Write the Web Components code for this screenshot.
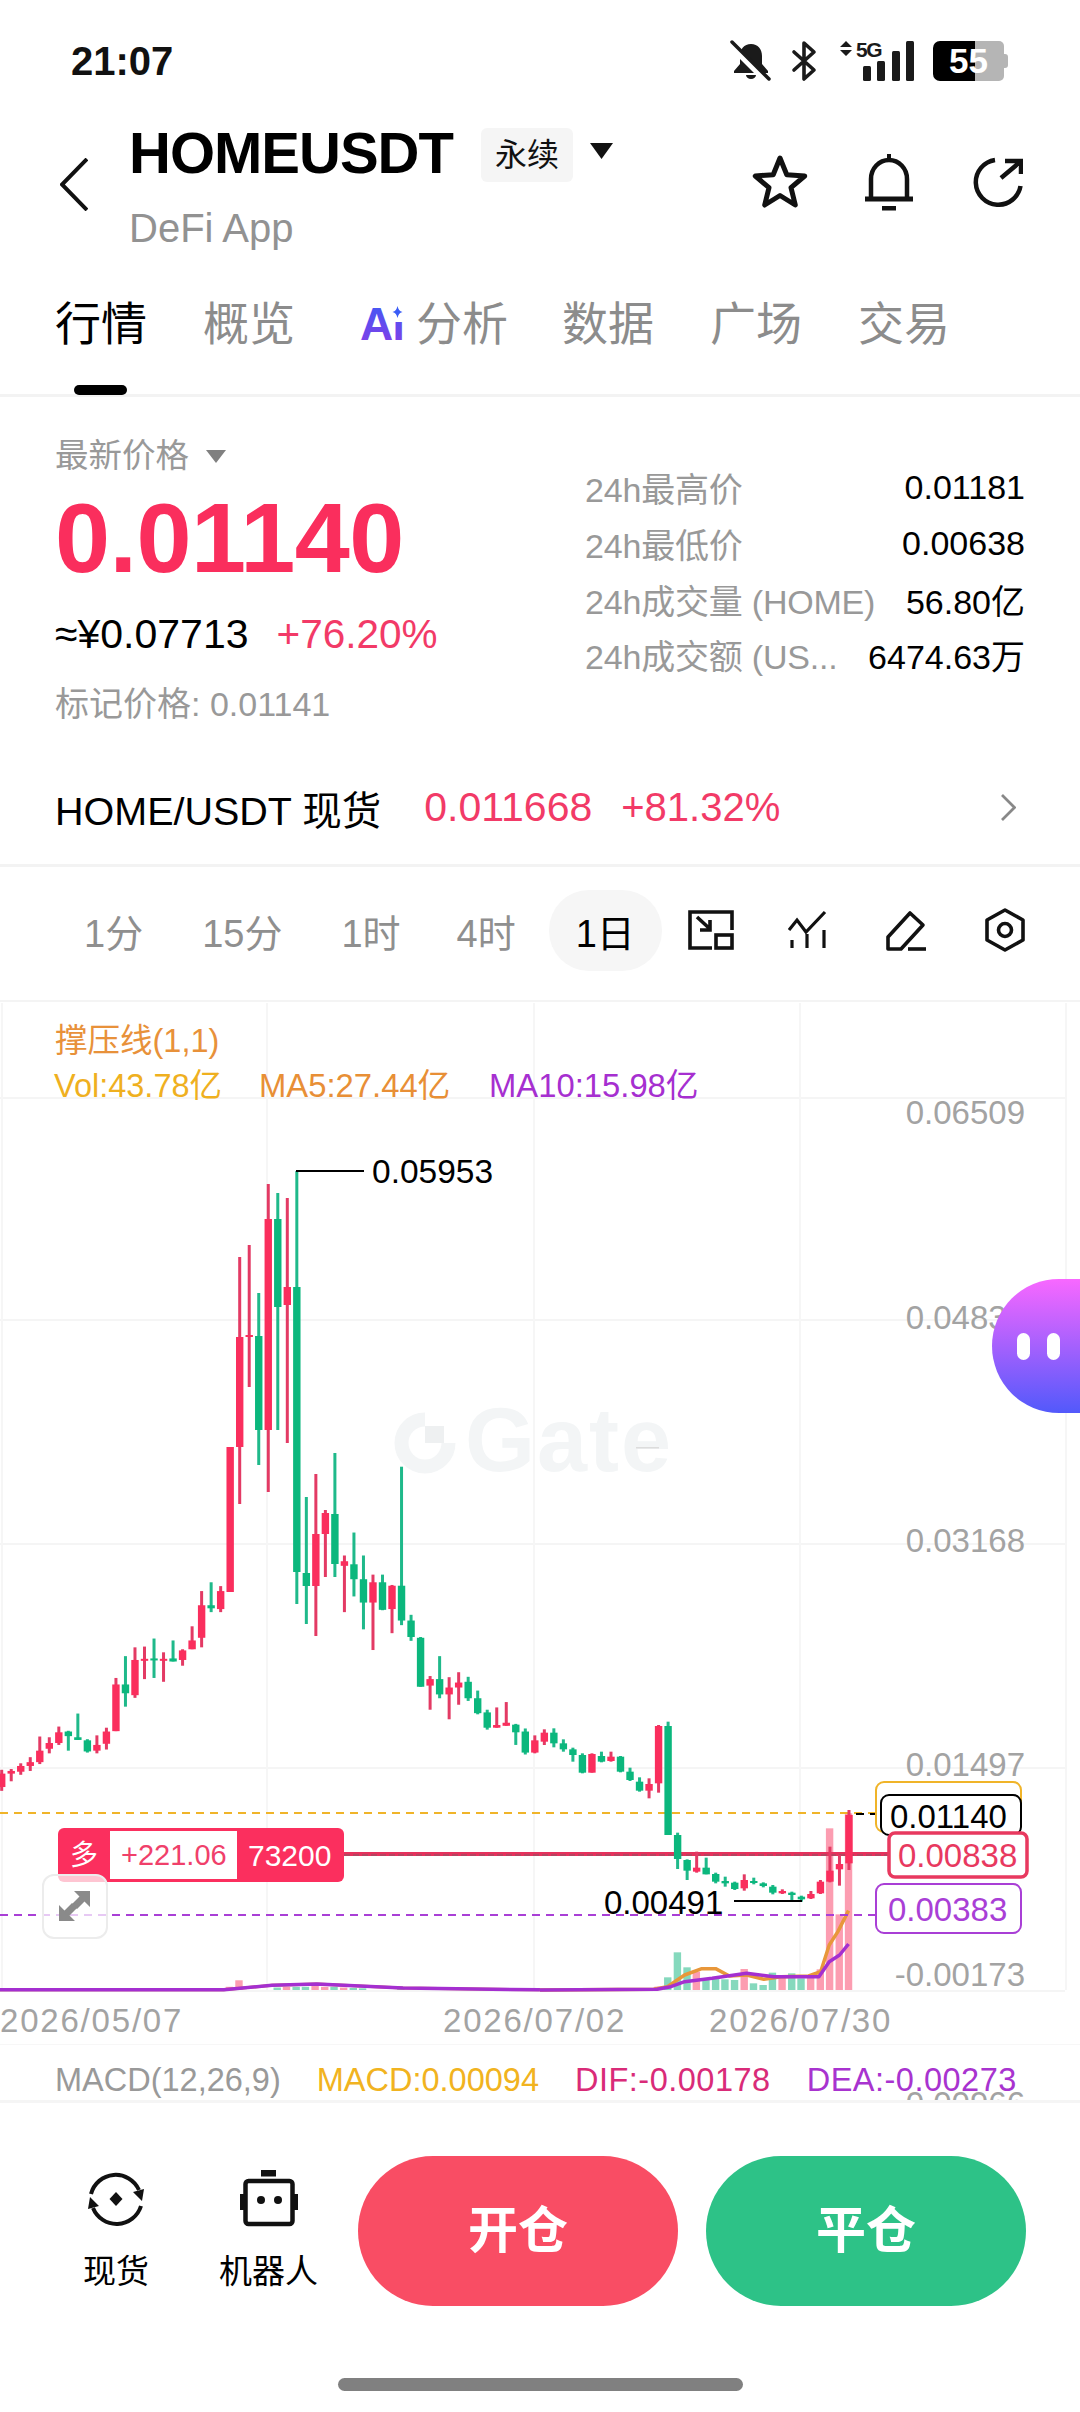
<!DOCTYPE html>
<html lang="zh">
<head>
<meta charset="utf-8">
<title>HOMEUSDT</title>
<style>
  html, body { margin: 0; padding: 0; background: #fff; }
  body {
    position: relative;
    width: 1080px;
    height: 2412px;
    overflow: hidden;
    font-family: "Liberation Sans", "Noto Sans CJK SC", sans-serif;
    color: #000;
  }
</style>
</head>
<body>
  <status-bar></status-bar>
  <market-header></market-header>
  <market-tabs>
    <market-tab active>行情</market-tab>
    <market-tab>概览</market-tab>
    <market-tab ai>分析</market-tab>
    <market-tab>数据</market-tab>
    <market-tab>广场</market-tab>
    <market-tab>交易</market-tab>
  </market-tabs>
  <price-panel>
    <stat-row slot="stats"><span slot="label">24h最高价</span>0.01181</stat-row>
    <stat-row slot="stats"><span slot="label">24h最低价</span>0.00638</stat-row>
    <stat-row slot="stats"><span slot="label">24h成交量 (HOME)</span>56.80亿</stat-row>
    <stat-row slot="stats"><span slot="label">24h成交额 (US...</span>6474.63万</stat-row>
  </price-panel>
  <spot-row></spot-row>
  <interval-bar></interval-bar>
  <kline-chart></kline-chart>
  <macd-legend></macd-legend>
  <trade-bar></trade-bar>
  <home-indicator></home-indicator>
  <ai-bubble></ai-bubble>

<script>
// components/status-bar
class StatusBar extends HTMLElement {
  constructor() {
    super();
    this.attachShadow({ mode: 'open' });
  }

  connectedCallback() {
    this.shadowRoot.innerHTML = `
      <style>
        :host { display: flex; align-items: center; justify-content: space-between; box-sizing: border-box; height: 100px; padding: 22px 72px 0 71px; }
        .time { font-size: 40px; font-weight: 700; line-height: 44px; color: #111; }
        .icons { display: flex; align-items: center; gap: 21px; }
        svg { display: block; overflow: visible; }
        .net { margin-left: 3px; margin-right: -3px; }
      </style>
      <div class="time">21:07</div>
      <div class="icons">
        <svg width="40" height="40" viewBox="0 0 40 40">
          <path fill="#1a1a1a" d="M20 3c-7 0-11 5-11 12v8l-6 7v2h34v-2l-6-7v-8C31 8 27 3 20 3z"/>
          <path fill="#1a1a1a" d="M15 34h10a5 4 0 0 1-10 0z"/>
          <path stroke="#fff" stroke-width="7" d="M-1 3 36 40"/>
          <path stroke="#1a1a1a" stroke-width="3.5" stroke-linecap="round" d="M1 1 38 38"/>
        </svg>
        <svg width="24" height="40" viewBox="0 0 24 40" fill="none" stroke="#1a1a1a" stroke-width="3.6" stroke-linejoin="round" stroke-linecap="round">
          <path d="M2 11 22 29 12 38V2L22 11 2 29"/>
        </svg>
        <svg class="net" width="75" height="40" viewBox="0 0 75 40">
          <path fill="#1a1a1a" d="M6 0l6 6H0zM6 15 0 9h12z"/>
          <text x="16" y="16" font-size="21" font-weight="700" letter-spacing="-1.5" fill="#1a1a1a">5G</text>
          <rect x="23" y="25" width="8" height="15" rx="1.5" fill="#1a1a1a"/>
          <rect x="37" y="20" width="8" height="20" rx="1.5" fill="#1a1a1a"/>
          <rect x="52" y="10" width="8" height="30" rx="1.5" fill="#1a1a1a"/>
          <rect x="66" y="0" width="8" height="40" rx="1.5" fill="#1a1a1a"/>
        </svg>
        <svg width="75" height="40" viewBox="0 0 75 40">
          <path fill="#b5b5b5" d="M42 0h24a5 5 0 0 1 5 5v30a5 5 0 0 1-5 5H42z"/>
          <path fill="#b5b5b5" d="M71 13h1a3 3 0 0 1 3 3v8a3 3 0 0 1-3 3h-1z"/>
          <path fill="#000" d="M42 0H7a7 7 0 0 0-7 7v26a7 7 0 0 0 7 7h35z"/>
          <text x="16" y="32" font-size="35" font-weight="700" fill="#fff">55</text>
        </svg>
      </div>
    `;
  }
}
customElements.define('status-bar', StatusBar);

// components/market-header
class MarketHeader extends HTMLElement {
  constructor() {
    super();
    this.attachShadow({ mode: 'open' });
  }

  connectedCallback() {
    this.shadowRoot.innerHTML = `
      <style>
        :host { display: flex; align-items: flex-start; box-sizing: border-box; height: 170px; padding: 28px 57px 0 60px; }
        svg { display: block; }
        .back { margin: 30px 41px 0 0; }
        .title { display: flex; align-items: center; height: 54px; }
        h1 { margin: -4px 0 0; font-size: 58px; font-weight: 700; letter-spacing: -1px; line-height: 54px; }
        .badge { margin-left: 28px; padding: 0 14px; height: 54px; line-height: 54px; font-size: 32px; background: #f5f5f5; border-radius: 6px; color: #111; }
        .caret { margin-left: 17px; margin-top: -8px; }
        .sub { margin-top: 23px; font-size: 40px; line-height: 46px; color: #929292; }
        .actions { display: flex; align-items: center; height: 108px; margin-left: auto; }
        .star { margin-right: 55px; }
        .bell { margin-right: 60px; }
      </style>
      <svg class="back" width="28" height="53" viewBox="0 0 28 53" fill="none" stroke="#111" stroke-width="4">
        <path d="M27 1 2 26.500 27 52"/>
      </svg>
      <div>
        <div class="title">
          <h1>HOMEUSDT</h1>
          <span class="badge">永续</span>
          <svg class="caret" width="23" height="16" viewBox="0 0 23 16"><path fill="#111" d="M0 0h23L11.500 16z"/></svg>
        </div>
        <div class="sub">DeFi App</div>
      </div>
      <div class="actions">
        <svg class="star" width="60" height="60" viewBox="0 0 60 60" fill="none" stroke="#111" stroke-width="5" stroke-linejoin="round">
          <path d="M30 6 36.800 22.700 54.700 24 41 35.600 45.300 53 30 43.500 14.700 53 19 35.600 5.300 24 23.200 22.700z"/>
        </svg>
        <svg class="bell" width="48" height="57" viewBox="0 0 48 57" fill="none" stroke="#111" stroke-width="4.500">
          <path d="M6 45V25a18 19 0 0 1 36 0v20"/>
          <path stroke-width="5" d="M0 45h48"/>
          <rect x="22" y="0" width="4" height="7" fill="#111" stroke="none"/>
          <rect x="17" y="52" width="14" height="4.500" fill="#111" stroke="none"/>
        </svg>
        <svg width="50" height="50" viewBox="0 0 50 50" fill="none" stroke="#111" stroke-width="4.500">
          <path d="M22 3A22.500 22.500 0 1 0 47.500 29"/>
          <path d="M28 21 47 5M32 4H48V17"/>
        </svg>
      </div>
    `;
  }
}
customElements.define('market-header', MarketHeader);

// components/market-tabs
class MarketTabs extends HTMLElement {
  constructor() {
    super();
    this.attachShadow({ mode: 'open' });
  }

  connectedCallback() {
    this.shadowRoot.innerHTML = `
      <style>
        :host { display: flex; gap: 56px; box-sizing: border-box; height: 127px; padding: 27px 0 0 55px; border-bottom: 3px solid #f3f3f3; }
      </style>
      <slot></slot>
    `;
  }
}
customElements.define('market-tabs', MarketTabs);

class MarketTab extends HTMLElement {
  constructor() {
    super();
    this.attachShadow({ mode: 'open' });
  }

  connectedCallback() {
    const ai = this.hasAttribute('ai') ? `
      <svg class="ai" width="46" height="40" viewBox="0 0 46 40">
        <defs><linearGradient id="g" x1="0" y1="0" x2="0" y2="1"><stop offset="0" stop-color="#3a5cf6"/><stop offset="1" stop-color="#8b3be6"/></linearGradient></defs>
        <text x="0" y="36" font-size="46" font-weight="700" letter-spacing="-1" fill="url(#g)">Ai</text>
        <rect x="30" y="0" width="16" height="18" fill="#fff"/>
        <path fill="#3a5cf6" d="M37.500 2c.8 3.500 2 5 5 6-3 1-4.200 2.500-5 6-.8-3.500-2-5-5-6 3-1 4.200-2.500 5-6z"/>
      </svg>` : '';
    this.shadowRoot.innerHTML = `
      <style>
        :host { display: flex; align-items: center; position: relative; height: 54px; font-size: 46px; line-height: 54px; color: #8c8c8c; }
        :host([active]) { color: #000; }
        :host([ai]) { margin-left: 9px; margin-right: -2px; }
        :host([active])::after { content: ""; position: absolute; left: 19px; top: 88px; width: 53px; height: 10px; border-radius: 5px; background: #000; }
        .ai { margin-right: 10px; overflow: visible; }
      </style>
      ${ai}<slot></slot>
    `;
  }
}
customElements.define('market-tab', MarketTab);

// components/price-panel
class PricePanel extends HTMLElement {
  constructor() {
    super();
    this.attachShadow({ mode: 'open' });
  }

  connectedCallback() {
    this.shadowRoot.innerHTML = `
      <style>
        :host { display: flex; box-sizing: border-box; height: 357px; padding: 36px 55px 0; }
        .left { width: 530px; }
        .label { display: flex; align-items: center; gap: 17px; font-size: 33.500px; line-height: 46px; color: #999; }
        .price { margin-top: 9px; font-size: 99px; font-weight: 700; line-height: 100px; letter-spacing: -.5px; color: #fa2e5d; }
        .row { display: flex; gap: 28px; margin-top: 21px; font-size: 41px; line-height: 50px; }
        .row b { font-weight: 400; font-size: 40.500px; color: #f23a67; }
        .mark { margin-top: 22px; font-size: 34px; line-height: 46px; color: #999; }
        .stats { display: flex; flex-direction: column; flex: 1; padding-top: 27px; }
      </style>
      <div class="left">
        <div class="label">最新价格
          <svg width="20" height="13" viewBox="0 0 20 13"><path fill="#808080" d="M0 0h20L10 13z"/></svg>
        </div>
        <div class="price">0.01140</div>
        <div class="row"><span>≈¥0.07713</span><b>+76.20%</b></div>
        <div class="mark">标记价格: 0.01141</div>
      </div>
      <div class="stats"><slot name="stats"></slot></div>
    `;
  }
}
customElements.define('price-panel', PricePanel);

class StatRow extends HTMLElement {
  constructor() {
    super();
    this.attachShadow({ mode: 'open' });
  }

  connectedCallback() {
    this.shadowRoot.innerHTML = `
      <style>
        :host { display: flex; justify-content: space-between; align-items: center; height: 55.700px; font-size: 34px; color: #000; white-space: nowrap; }
        .l { color: #999; font-size: 34px; letter-spacing: -.2px; }
      </style>
      <span class="l"><slot name="label"></slot></span>
      <span><slot></slot></span>
    `;
  }
}
customElements.define('stat-row', StatRow);

// components/spot-row
class SpotRow extends HTMLElement {
  constructor() {
    super();
    this.attachShadow({ mode: 'open' });
  }

  connectedCallback() {
    this.shadowRoot.innerHTML = `
      <style>
        :host { display: flex; align-items: center; box-sizing: border-box; height: 113px; padding: 0 64px 4px 55px; border-bottom: 3px solid #f3f3f3; font-size: 39.500px; white-space: nowrap; }
        .price { margin-left: 43px; color: #f23a67; font-size: 41px; }
        .pct { margin-left: 29px; color: #f23a67; font-size: 40px; }
        svg { margin-left: auto; display: block; }
      </style>
      <span>HOME/USDT 现货</span>
      <span class="price">0.011668</span>
      <span class="pct">+81.32%</span>
      <svg width="15" height="27" viewBox="0 0 15 27" fill="none" stroke="#888" stroke-width="2.800"><path d="M1 1 13.500 13.500 1 26"/></svg>
    `;
  }
}
customElements.define('spot-row', SpotRow);

// components/interval-bar
class IntervalBar extends HTMLElement {
  constructor() {
    super();
    this.attachShadow({ mode: 'open' });
  }

  connectedCallback() {
    this.shadowRoot.innerHTML = `
      <style>
        :host { display: flex; align-items: center; box-sizing: border-box; height: 135px; padding: 0 0 7px 84px; border-bottom: 2px solid #f4f4f4; font-size: 38px; color: #8f8f8f; white-space: nowrap; }
        .times { display: flex; gap: 59px; }
        .tight { margin-left: -3px; }
        .active { display: flex; align-items: center; justify-content: center; box-sizing: border-box; width: 113px; height: 81px; margin-left: 33px; border-radius: 40px; background: #f6f6f6; color: #000; }
        .tools { display: flex; align-items: center; margin-left: 26px; }
        svg { display: block; }
        .t1 { margin-right: 54px; }
        .t2 { margin-right: 58px; }
        .t3 { margin-right: 58px; }
      </style>
      <div class="times"><span>1分</span><span>15分</span><span>1时</span><span class="tight">4时</span></div>
      <div class="active">1日</div>
      <div class="tools">
        <svg class="t1" width="46" height="40" viewBox="0 0 46 40" fill="none" stroke="#111" stroke-width="3.600">
          <path d="M24 38H2V2H44V20"/>
          <rect x="28" y="25" width="16" height="13"/>
          <path d="M9 7 22 19M22 10V20H12"/>
        </svg>
        <svg class="t2" width="40" height="40" viewBox="0 0 40 40" fill="none" stroke="#111" stroke-width="3.200">
          <path d="M1 20 9 10 18 22 37 2"/>
          <path d="M4 30V38M19 24V38M36 20V38"/>
        </svg>
        <svg class="t3" width="41" height="41" viewBox="0 0 41 41" fill="none" stroke="#111" stroke-width="3.600" stroke-linejoin="round">
          <path d="M2 39V27L24 3 37 15 15 39z"/>
          <path d="M22 39H40"/>
        </svg>
        <svg width="40" height="44" viewBox="0 0 40 44" fill="none" stroke="#111" stroke-width="3.600" stroke-linejoin="round">
          <path d="M20 2 38 12V32L20 42 2 32V12z"/>
          <circle cx="20" cy="22" r="6.500"/>
        </svg>
      </div>
    `;
  }
}
customElements.define('interval-bar', IntervalBar);

// components/kline-chart
// candles are [wick top, body top, body bottom, wick bottom] read off the reference crops
const RED = '#fa2e5d', GREEN = '#0bb77d';
const zx5 = z => z / 2.904;
const zy5 = z => 1500 + z / 2.613;
const zx6 = z => 540 + z / 2.904;
const zy6 = z => 1700 + z / 3;

const CANDLES_LEFT = [
  ['r',705,715,750,760],['r',703,708,715,735],['r',688,695,710,718],['r',672,685,695,708],
  ['r',618,655,685,690],['r',620,635,650,662],['r',592,607,635,640],['g',603,605,617,655],
  ['g',558,620,627,627],['g',625,628,657,660],['r',615,640,655,662],['r',595,605,637,652],
  ['r',465,482,604,604],['g',408,482,505,540],['r',385,418,510,517],['r',383,415,418,468],
  ['g',362,414,417,465],['r',398,415,417,475],['g',367,414,422,422],['r',390,393,418,433],
  ['r',330,367,390,390],['r',238,275,360,385],['g',215,275,283,293],['r',225,238,285,293]
].map(c => [c[0], zy5(c[1]), zy5(c[2]), zy5(c[3]), zy5(c[4])]);

const CANDLES_PEAK = [
  ['r',1447,1447,1592,1592],['r',1257,1337,1447,1504],['r',1245,1335,1337,1387],['g',1293,1336,1430,1465],
  ['r',1184,1219,1430,1492],['g',1193,1219,1307,1430],['r',1198,1287,1305,1443],['g',1171,1287,1572,1604],
  ['g',1497,1573,1586,1624],['r',1474,1534,1586,1636],['r',1510,1513,1534,1577],['g',1453,1514,1564,1577]
];

const CANDLES_FALL = [
  ['r',145,160,172,293],['g',85,168,207,252],['g',145,207,268,338],['r',195,215,268,392],
  ['g',195,215,287,288],['r',222,224,285,348],['g',-87,224,315,327],['g',300,315,358,368],
  ['g',358,360,488,488],['r',460,468,485,548],['g',408,468,508,518],['r',463,490,508,573],
  ['r',450,477,490,535],['g',462,475,518,525],['g',498,518,557,560],['g',548,555,595,600],
  ['r',542,588,595,595],['r',528,582,590,590],['g',585,587,607,640],['g',597,605,660,665],
  ['r',615,628,660,662]
].map(c => [c[0], zy5(c[1]), zy5(c[2]), zy5(c[3]), zy5(c[4])]);

const CANDLES_RIGHT = [
  ['r',88,98,125,135],['g',85,98,130,142],['g',118,130,148,155],['g',143,148,165,185],
  ['g',160,165,218,220],['r',160,162,218,218],['g',155,168,185,187],['r',155,170,183,185],
  ['g',168,170,215,217],['g',203,215,240,243],['g',232,245,272,275],['r',235,252,272,295],
  ['r',75,78,250,278],['g',65,78,405,405],['g',398,405,477,507],['g',478,480,512,540],
  ['r',455,503,515,518],['g',473,503,523,523],['g',518,522,545,550],['g',530,543,550,560],
  ['g',545,548,567,570],['r',523,540,565,572],['g',533,543,548,553],['g',547,550,558,562],
  ['g',555,560,578,583],['r',568,573,580,582],['g',575,578,585,600],['g',587,590,598,605],
  ['r',573,582,595,597],['r',540,545,580,582],['r',440,512,545,547],['r',465,492,508,557],
  ['r',330,345,490,510]
].map(c => [c[0], zy6(c[1]), zy6(c[2]), zy6(c[3]), zy6(c[4])]);

const VOLUMES_RIGHT = [
  [343,860,'r'],[371,832,'g'],[399,757,'g'],[427,802,'g'],[454,815,'r'],[482,835,'g'],[510,835,'g'],
  [537,838,'g'],[565,840,'g'],[593,807,'r'],[620,850,'g'],[648,855,'g'],[675,818,'g'],[703,830,'r'],
  [731,820,'g'],[758,835,'g'],[786,830,'r'],[814,808,'r'],[841,385,'r'],[869,643,'r'],[896,340,'r']
];

const VOLUMES_LEFT = [
  [666,1272,'r'],[694,1255,'r'],[805,1274,'g'],[832,1272,'r'],[860,1272,'g'],[887,1272,'g'],[915,1270,'r'],
  [943,1272,'r'],[970,1272,'g'],[998,1274,'r'],[1026,1275,'g'],[1053,1276,'g'],[1164,1272,'g']
];

const MA5 = [[0,870],[330,868],[370,860],[420,825],[470,806],[510,806],[550,828],[600,825],[650,838],[700,830],[780,828],[815,815],[840,735],[865,695],[896,632]];
const MA10 = [[0,870],[340,868],[380,860],[420,845],[500,835],[600,820],[680,830],[810,830],[840,785],[870,765],[896,732]];
const MA_LEFT = [[0,1280],[650,1280],[790,1268],[920,1265],[1170,1275],[1568,1280]];

class KlineChart extends HTMLElement {
  constructor() {
    super();
    this.attachShadow({ mode: 'open' });
  }

  connectedCallback() {
    this.render();
  }

  _text(x, y, str, fill, size, anchor = 'start', extra = '') {
    // y is the middle of the digits
    return `<text x="${x}" y="${y + size * 0.35}" fill="${fill}" font-size="${size}" text-anchor="${anchor}" ${extra}>${str}</text>`;
  }

  _candle(i, c) {
    const x = 1.7 + 9.52 * i;
    const col = c[0] === 'r' ? RED : GREEN;
    const wick = c[0] === 'r' ? '#e33a64' : '#1fb98a';
    return `<rect x="${x - 1.5}" y="${c[1]}" width="3" height="${c[4] - c[1]}" fill="${wick}"/>` +
      `<rect x="${x - 3.7}" y="${c[2]}" width="7.4" height="${Math.max(c[3] - c[2], 2)}" fill="${col}"/>`;
  }

  _grid() {
    let out = '';
    [1097, 1319, 1543, 1767, 1990].forEach(y => { out += `<rect x="0" y="${y}" width="1065" height="2" fill="#f5f5f5"/>`; });
    [1, 266, 533, 799, 1065].forEach(x => { out += `<rect x="${x}" y="1003" width="2" height="987" fill="#f6f6f6"/>`; });
    out += '<rect x="0" y="2044" width="1080" height="1" fill="#f7f7f7"/>';
    return out;
  }

  _watermark() {
    return `
      <path d="M425 1419.500A23.500 23.500 0 1 0 448.500 1443" fill="none" stroke="#f3f5f6" stroke-width="14"/>
      <rect x="425" y="1426" width="19" height="17" fill="#eef0f1"/>
      <text x="465" y="1471" font-size="90" font-weight="700" fill="#f3f5f6" letter-spacing="2">Gate</text>
      <rect x="636" y="1447" width="23" height="1.500" fill="#dcdcdc"/>`;
  }

  _volumes() {
    const pink = '#fc9db1', mint = '#85d9bd';
    let out = '';
    VOLUMES_LEFT.forEach(v => {
      const y = zy5(v[1]);
      out += `<rect x="${zx5(v[0]) - 3.7}" y="${y}" width="7.4" height="${1990 - y}" fill="${v[2] === 'r' ? pink : mint}"/>`;
    });
    VOLUMES_RIGHT.forEach(v => {
      const y = zy6(v[1]);
      out += `<rect x="${zx6(v[0]) - 3.7}" y="${y}" width="7.4" height="${1990 - y}" fill="${v[2] === 'r' ? pink : mint}"/>`;
    });
    return out;
  }

  _lines() {
    const left = MA_LEFT.map(p => `${zx5(p[0])},${zy5(p[1])}`).join(' ');
    const line = (pts, col) => `<polyline points="${pts.map(p => `${zx6(p[0])},${zy6(p[1])}`).join(' ')}" fill="none" stroke="${col}" stroke-width="3.500" stroke-linejoin="round"/>`;
    return `<polyline points="${left}" fill="none" stroke="#e8913a" stroke-width="3"/>` +
      `<polyline points="${left}" fill="none" stroke="#a42fd0" stroke-width="3.500"/>` +
      line(MA5, '#e8973a') + line(MA10, '#a42fd0');
  }

  render() {
    let candles = '';
    let i = 0;
    [CANDLES_LEFT, CANDLES_PEAK, CANDLES_FALL, CANDLES_RIGHT].forEach(list => {
      list.forEach(c => { candles += this._candle(i, c); i++; });
    });

    const axis = '#a3a3a3';
    this.shadowRoot.innerHTML = `
      <style>
        :host { display: block; height: 1043px; overflow: hidden; }
        svg { display: block; }
      </style>
      <svg width="1080" height="1043" viewBox="0 1002 1080 1043">
        ${this._grid()}
        ${this._watermark()}
        ${this._volumes()}
        ${this._lines()}
        <path d="M0 1813H875" stroke="#f0b429" stroke-width="2" stroke-dasharray="8 6"/>
        <path d="M0 1915H875" stroke="#a93fd6" stroke-width="2" stroke-dasharray="8 6"/>
        <path d="M344 1854H890" stroke="#e5315c" stroke-width="4"/>
        <path d="M344 1855H890" stroke="#666" stroke-opacity=".5" stroke-width="1.500" stroke-dasharray="6 3"/>
        ${candles}
        <path d="M856 1814H880" stroke="#000" stroke-width="2" stroke-dasharray="8 6"/>

        <path d="M296 1171H364" stroke="#000" stroke-width="2"/>
        ${this._text(372, 1171, '0.05953', '#000', 33.5)}
        <path d="M734 1901H802" stroke="#000" stroke-width="2"/>
        ${this._text(604, 1902, '0.00491', '#000', 33)}

        ${this._text(55, 1041, '撑压线(1,1)', '#e8913a', 32.5)}
        ${this._text(54, 1086, 'Vol:43.78亿', '#efb01f', 32.5)}
        ${this._text(259, 1086, 'MA5:27.44亿', '#e88f36', 32.8)}
        ${this._text(489, 1086, 'MA10:15.98亿', '#a62fd0', 32.8)}

        ${this._text(1025, 1112, '0.06509', axis, 33, 'end')}
        ${this._text(1025, 1317, '0.04833', axis, 33, 'end')}
        ${this._text(1025, 1540, '0.03168', axis, 33, 'end')}
        ${this._text(1025, 1764, '0.01497', axis, 33, 'end')}
        ${this._text(1025, 1974, '-0.00173', axis, 33, 'end')}

        ${this._text(0, 2020, '2026/05/07', axis, 33, 'start', 'letter-spacing="1.800"')}
        ${this._text(443, 2020, '2026/07/02', axis, 33, 'start', 'letter-spacing="1.800"')}
        ${this._text(709, 2020, '2026/07/30', axis, 33, 'start', 'letter-spacing="1.800"')}

        <rect x="876" y="1782" width="145" height="50" rx="8" fill="#fff" stroke="#f0b429" stroke-width="2"/>
        <rect x="881" y="1795" width="140" height="40" rx="8" fill="#fff" stroke="#000" stroke-width="2"/>
        ${this._text(890, 1816, '0.01140', '#000', 33)}
        <rect x="889" y="1833" width="138" height="44" rx="6" fill="#fff" stroke="#e8395f" stroke-width="3.500"/>
        ${this._text(898, 1855, '0.00838', '#e8395f', 33)}
        <rect x="876" y="1884" width="145" height="49" rx="8" fill="#fff" stroke="#a93fd6" stroke-width="2"/>
        ${this._text(888, 1909, '0.00383', '#a93fd6', 33)}

        <rect x="58" y="1828" width="286" height="54" rx="6" fill="#fb2f5e"/>
        <rect x="110" y="1831" width="127" height="48" fill="#fff"/>
        ${this._text(70, 1855, '多', '#fff', 28)}
        ${this._text(121, 1855, '+221.06', '#f0406a', 29)}
        ${this._text(248, 1855, '73200', '#fff', 30)}

        <rect x="43" y="1875" width="64" height="63" rx="11" fill="#fff" fill-opacity=".72" stroke="#ececec" stroke-width="2"/>
        <g fill="#8a8a8a">
          <path d="M90 1891v16l-5.500-5.500-7.500 7.500-5-5 7.500-7.500-5.500-5.500z"/>
          <path d="M59 1921v-16l5.500 5.500 7.500-7.500 5 5-7.500 7.500 5.500 5.500z"/>
        </g>
      </svg>
    `;
  }
}
customElements.define('kline-chart', KlineChart);

// components/macd-legend
class MacdLegend extends HTMLElement {
  constructor() {
    super();
    this.attachShadow({ mode: 'open' });
  }

  connectedCallback() {
    this.shadowRoot.innerHTML = `
      <style>
        :host { display: flex; position: relative; gap: 36px; box-sizing: border-box; height: 58px; padding: 15px 0 0 55px; overflow: hidden; font-size: 32.500px; line-height: 40px; white-space: nowrap; border-bottom: 3px solid #f5f5f5; }
        .wide { letter-spacing: .5px; }
        .axis { position: absolute; right: 55px; top: 42px; color: #a3a3a3; font-size: 33px; line-height: 33px; }
      </style>
      <span style="color:#999">MACD(12,26,9)</span>
      <span style="color:#f1b320">MACD:0.00094</span>
      <span class="wide" style="color:#d92b78">DIF:-0.00178</span>
      <span class="wide" style="color:#a833cf">DEA:-0.00273</span>
      <span class="axis">0.00966</span>
    `;
  }
}
customElements.define('macd-legend', MacdLegend);

// components/trade-bar
class TradeBar extends HTMLElement {
  constructor() {
    super();
    this.attachShadow({ mode: 'open' });
  }

  connectedCallback() {
    this.shadowRoot.innerHTML = `
      <style>
        :host { display: flex; align-items: flex-start; box-sizing: border-box; height: 275px; padding: 53px 54px 0 83px; }
        .item { display: flex; flex: none; flex-direction: column; align-items: center; gap: 22px; margin-top: 14px; font-size: 33px; line-height: 44px; white-space: nowrap; }
        .item + .item { margin-left: 70px; }
        svg { display: block; }
        button { all: unset; flex: none; width: 320px; height: 150px; text-align: center; line-height: 146px; border-radius: 75px; color: #fff; font-size: 50px; font-weight: 700; font-family: inherit; }
        .open { margin-left: 40px; background: #f94d64; }
        .close { margin-left: 28px; background: #2dc287; }
      </style>
      <div class="item">
        <svg width="58" height="58" viewBox="0 0 58 58">
          <g fill="none" stroke="#111" stroke-width="4">
            <path d="M4 24A25.500 25.500 0 0 1 52 20"/>
            <path d="M54 36A25.500 25.500 0 0 1 6 38"/>
          </g>
          <path fill="#111" d="M46 22 57 19 55 31zM12 36 1 39 3 27z"/>
          <path fill="#111" d="M29 22 35.500 29 29 36 22.500 29z"/>
        </svg>
        <span>现货</span>
      </div>
      <div class="item">
        <svg width="58" height="58" viewBox="0 0 58 58">
          <rect x="21" y="0" width="15" height="6.500" fill="#111"/>
          <rect x="5.500" y="11" width="47" height="43" rx="3" fill="none" stroke="#111" stroke-width="4.500"/>
          <rect x="0" y="24" width="4" height="16" fill="#111"/>
          <rect x="54" y="24" width="4" height="16" fill="#111"/>
          <circle cx="21" cy="30" r="4" fill="#111"/>
          <circle cx="38" cy="30" r="4" fill="#111"/>
        </svg>
        <span>机器人</span>
      </div>
      <button class="open">开仓</button>
      <button class="close">平仓</button>
    `;
  }
}
customElements.define('trade-bar', TradeBar);

// components/home-indicator
class HomeIndicator extends HTMLElement {
  constructor() {
    super();
    this.attachShadow({ mode: 'open' });
  }

  connectedCallback() {
    this.shadowRoot.innerHTML = `
      <style>
        :host { display: block; height: 34px; }
        div { width: 405px; height: 13px; margin: 0 auto; border-radius: 7px; background: #808080; }
      </style>
      <div></div>
    `;
  }
}
customElements.define('home-indicator', HomeIndicator);

// components/ai-bubble, floats over the chart
class AiBubble extends HTMLElement {
  constructor() {
    super();
    this.attachShadow({ mode: 'open' });
  }

  connectedCallback() {
    this.shadowRoot.innerHTML = `
      <style>
        :host { position: absolute; top: 1279px; right: 0; display: flex; align-items: center; gap: 17px; box-sizing: border-box; width: 88px; height: 134px; padding: 0 0 0 25px; border-radius: 67px 0 0 67px; background: linear-gradient(#f868ff, #5259fb); }
        i { display: block; width: 13px; height: 27px; border-radius: 6.500px; background: #fff; }
      </style>
      <i></i><i></i>
    `;
  }
}
customElements.define('ai-bubble', AiBubble);
</script>
</body>
</html>
